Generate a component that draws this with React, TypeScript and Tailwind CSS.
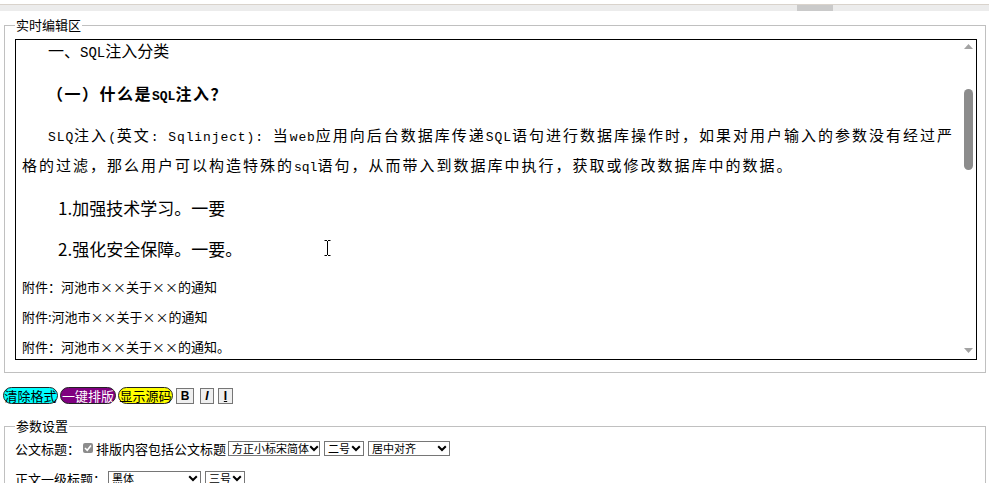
import React from "react";

function Chevron() {
  return (
    <svg width="10" height="7" viewBox="0 0 10 7" className="shrink-0">
      <polyline points="1.2,1.2 5,5 8.8,1.2" fill="none" stroke="#000" strokeWidth="2" />
    </svg>
  );
}

function Sel({ w, text, cls }: { w: string; text: string; cls?: string }) {
  return (
    <div
      className={`${w} ${cls ?? ""} h-[15px] border border-[#767676] flex items-center justify-between pl-[3px] pr-[2px] text-[11px] leading-none bg-white text-black`}
    >
      <span className="whitespace-nowrap">{text}</span>
      <Chevron />
    </div>
  );
}

function Arrow({ up }: { up: boolean }) {
  return (
    <svg width="9" height="5" viewBox="0 0 9 5">
      {up ? <polygon points="0,5 4.5,0 9,5" fill="#a3a3a3" /> : <polygon points="0,0 4.5,5 9,0" fill="#a3a3a3" />}
    </svg>
  );
}

export default function App() {
  return (
    <div className="w-[989px] h-[483px] overflow-hidden bg-white relative text-black font-['Noto_Sans_CJK_SC',sans-serif]">
      {/* top strip */}
      <div className="h-[4px] bg-white" />
      <div className="h-[1px] bg-[#d9d3cc]" />
      <div className="h-[6px] bg-[#ececec] flex">
        <div className="ml-[797px] w-[36px] h-full bg-[#cacaca]" />
      </div>

      {/* fieldset 1 */}
      <fieldset className="ml-[4px] mt-[6px] w-[982px] border border-[#c0c0c0] pl-[10px] pr-[8px] pt-[6px] pb-[12px] min-w-0">
        <legend className="px-[1px] text-[13px] leading-[16px]">实时编辑区</legend>
        <div className="w-[962px] h-[321px] border border-black flex overflow-hidden">
          <div className="flex-1 overflow-hidden">
            <div className="pl-[32px] h-[20px] text-[16px] leading-[20px] whitespace-nowrap">
              一、<span className="font-['Liberation_Mono',monospace] text-[14px] leading-none">SQL</span>注入分类
            </div>
            <div className="mt-[23px] h-[20px] pl-[31px] text-[16px] leading-[20px] font-bold tracking-[1.5px] whitespace-nowrap">
              （一）什么是<span className="font-['Liberation_Mono',monospace] text-[13px] font-bold leading-none tracking-normal">SQL</span>注入？
            </div>
            <div className="mt-[17px] text-[15px] leading-[30px] tracking-[2px] whitespace-nowrap">
              <div className="pl-[32px] h-[30px]">
                <span className="font-['Liberation_Mono',monospace] text-[13px] tracking-[0.9px] leading-none">SLQ</span>注入
                <span className="font-['Liberation_Mono',monospace] text-[13px] tracking-[0.9px] leading-none">(</span>英文
                <span className="font-['Liberation_Mono',monospace] text-[13px] tracking-[0.9px] leading-none">: Sqlinject): </span>当
                <span className="font-['Liberation_Mono',monospace] text-[13px] tracking-[0.9px] leading-none">web</span>应用向后台数据库传递
                <span className="font-['Liberation_Mono',monospace] text-[13px] tracking-[0.9px] leading-none">SQL</span>语句进行数据库操作时，如果对用户输入的参数没有经过严
              </div>
              <div className="pl-[6px] h-[30px]">
                格的过滤，那么用户可以构造特殊的
                <span className="font-['Liberation_Mono',monospace] text-[13px] tracking-normal leading-none">sql</span>语句，从而带入到数据库中执行，获取或修改数据库中的数据。
              </div>
            </div>
            <div className="mt-[16px] h-[24px] pl-[42px] text-[17px] leading-[24px] whitespace-nowrap">1.加强技术学习。一要</div>
            <div className="mt-[17px] h-[24px] pl-[42px] text-[17px] leading-[24px] whitespace-nowrap">2.强化安全保障。一要。</div>
            <div className="mt-[16px] h-[20px] pl-[6px] text-[13px] leading-[20px] whitespace-nowrap">附件：河池市××关于××的通知</div>
            <div className="mt-[10px] h-[20px] pl-[6px] text-[13px] leading-[20px] whitespace-nowrap">附件:河池市××关于××的通知</div>
            <div className="mt-[10px] h-[20px] pl-[6px] text-[13px] leading-[20px] whitespace-nowrap">附件：河池市××关于××的通知。</div>
          </div>
          <div className="w-[15px] flex flex-col items-center pt-[4px] pb-[6px]">
            <Arrow up={true} />
            <div className="mt-[40px] w-[9px] h-[81px] rounded-full bg-[#8c8c8c]" />
            <div className="mt-auto">
              <Arrow up={false} />
            </div>
          </div>
        </div>
      </fieldset>

      {/* toolbar */}
      <div className="mt-[14px] pl-[3px] flex items-center text-[13px] leading-none">
        <div className="w-[55px] h-[17px] rounded-full border border-[#222] bg-[#00ffff] flex items-center justify-center">清除格式</div>
        <div className="ml-[2px] w-[56px] h-[17px] rounded-full border border-[#222] bg-[#800080] text-white flex items-center justify-center">一键排版</div>
        <div className="ml-[2px] w-[55px] h-[17px] rounded-full border border-[#222] bg-[#ffff00] flex items-center justify-center">显示源码</div>
        <div className="ml-[3px] w-[18px] h-[16px] border border-[#767676] bg-[#efefef] flex items-center justify-center font-['Liberation_Sans',sans-serif] font-bold text-[12px]">B</div>
        <div className="ml-[6px] w-[14px] h-[16px] border border-[#767676] bg-[#efefef] flex items-center justify-center font-['Liberation_Sans',sans-serif] font-bold italic text-[12px]">I</div>
        <div className="ml-[4px] w-[15px] h-[16px] border border-[#767676] bg-[#efefef] flex items-center justify-center font-['Liberation_Sans',sans-serif] font-bold underline text-[12px]">I</div>
      </div>

      {/* fieldset 2 */}
      <fieldset className="ml-[4px] mt-[14px] w-[982px] border border-[#c0c0c0] pl-[10px] pr-[8px] pt-[6px] pb-[12px] min-w-0">
        <legend className="px-[1px] text-[13px] leading-[16px]">参数设置</legend>
        <div className="flex items-center h-[16px] text-[13px] leading-none whitespace-nowrap">
          <span>公文标题：</span>
          <div className="ml-[3px] w-[10px] h-[10px] rounded-[2px] bg-[#8c8c8c] flex items-center justify-center">
            <svg width="8" height="8" viewBox="0 0 8 8">
              <polyline points="1,4 3.2,6.2 7,1.6" fill="none" stroke="#fff" strokeWidth="1.6" />
            </svg>
          </div>
          <span className="ml-[3px]">排版内容包括公文标题</span>
          <Sel w="w-[92px]" cls="ml-[2px]" text="方正小标宋简体" />
          <Sel w="w-[40px]" cls="ml-[4px]" text="二号" />
          <Sel w="w-[82px]" cls="ml-[4px]" text="居中对齐" />
        </div>
        <div className="mt-[14px] flex items-center h-[16px] text-[13px] leading-none whitespace-nowrap">
          <span>正文一级标题：</span>
          <Sel w="w-[93px]" cls="ml-[2px]" text="黑体" />
          <Sel w="w-[40px]" cls="ml-[4px]" text="三号" />
        </div>
      </fieldset>

      {/* text cursor */}
      <svg className="absolute left-[324px] top-[240px]" width="7" height="16" viewBox="0 0 7 16">
        <path d="M0.5 0.5H3M4 0.5H6.5M3.5 1V15M0.5 15.5H3M4 15.5H6.5" stroke="#000" strokeWidth="1" fill="none" />
      </svg>
    </div>
  );
}
